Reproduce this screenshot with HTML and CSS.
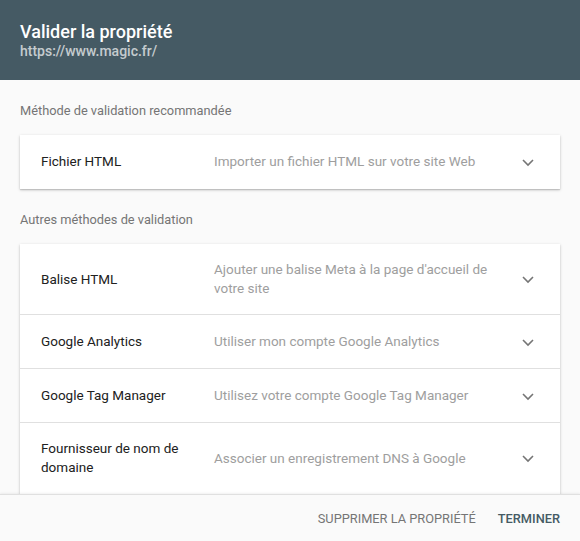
FILE: index.html
```html
<!DOCTYPE html>
<html lang="fr">
<head>
    <meta charset="UTF-8">
    <meta name="viewport" content="width=device-width, initial-scale=1.0">
    <title>Valider la propriété</title>
    <link rel="stylesheet" href="styles.css">
</head>
<body>
    <div class="dialog">
        <div class="header">
            <h1>Valider la propriété</h1>
            <div class="url">https://www.magic.fr/</div>
        </div>

        <div class="content">
            <div class="section-label">Méthode de validation recommandée</div>
            <div class="card">
                <div class="row">
                    <div class="name">Fichier HTML</div>
                    <div class="desc">Importer un fichier HTML sur votre site Web</div>
                    <svg class="chevron" viewBox="0 0 24 24"><path d="M7 10l5 5 5-5"/></svg>
                </div>
            </div>

            <div class="section-label">Autres méthodes de validation</div>
            <div class="card">
                <div class="row">
                    <div class="name">Balise HTML</div>
                    <div class="desc">Ajouter une balise Meta à la page d'accueil de votre site</div>
                    <svg class="chevron" viewBox="0 0 24 24"><path d="M7 10l5 5 5-5"/></svg>
                </div>
                <div class="row">
                    <div class="name">Google Analytics</div>
                    <div class="desc">Utiliser mon compte Google Analytics</div>
                    <svg class="chevron" viewBox="0 0 24 24"><path d="M7 10l5 5 5-5"/></svg>
                </div>
                <div class="row">
                    <div class="name">Google Tag Manager</div>
                    <div class="desc">Utilisez votre compte Google Tag Manager</div>
                    <svg class="chevron" viewBox="0 0 24 24"><path d="M7 10l5 5 5-5"/></svg>
                </div>
                <div class="row">
                    <div class="name">Fournisseur de nom de domaine</div>
                    <div class="desc">Associer un enregistrement DNS à Google</div>
                    <svg class="chevron" viewBox="0 0 24 24"><path d="M7 10l5 5 5-5"/></svg>
                </div>
            </div>
        </div>

        <div class="footer">
            <button class="btn">SUPPRIMER LA PROPRIÉTÉ</button>
            <button class="btn primary">TERMINER</button>
        </div>
    </div>
</body>
</html>
```

FILE: styles.css
```css
html, body {
    margin: 0;
    height: 100%;
}
body {
    font-family: Roboto, "Noto Sans", Arial, sans-serif;
    background-color: #fafafa;
    color: #212121;
}
.dialog {
    display: flex;
    flex-direction: column;
    height: 100%;
}
.header {
    background-color: #455a64;
    padding: 21px 20px 21px;
    flex-shrink: 0;
}
.header h1 {
    margin: 0;
    font-size: 18px;
    font-weight: 500;
    line-height: 22px;
    color: #fff;
}
.url {
    font-size: 14px;
    font-weight: 500;
    line-height: 16px;
    color: rgba(255,255,255,0.7);
}
.content {
    flex: 1;
    overflow: hidden;
    padding: 0 20px;
}
.section-label {
    font-size: 12.8px;
    color: #757575;
    line-height: 18px;
    padding: 22px 0 15px;
}
.card {
    background: #fff;
    box-shadow: 0 1px 3px rgba(0,0,0,0.2), 0 1px 1px rgba(0,0,0,0.12);
}
.row {
    display: flex;
    align-items: center;
    min-height: 21px;
    padding: 16px 20px 16px 21px;
    font-size: 13.5px;
    line-height: 19px;
    border-bottom: 1px solid #e0e0e0;
}
.row:last-child {
    border-bottom-color: transparent;
}
.name {
    width: 173px;
    flex-shrink: 0;
    padding-right: 12px;
    box-sizing: border-box;
}
.desc {
    flex: 1;
    color: #9e9e9e;
    padding-right: 20px;
}
.chevron {
    width: 24px;
    height: 24px;
    margin: -4px 0;
    fill: none;
    stroke: #757575;
    stroke-width: 1.6;
    flex-shrink: 0;
}
.footer {
    flex-shrink: 0;
    height: 46px;
    display: flex;
    justify-content: flex-end;
    align-items: center;
    padding: 0 12px;
    background: #fafafa;
    border-top: 1px solid #e0e0e0;
    box-shadow: 0 -1px 2px rgba(0,0,0,0.06);
}
.btn {
    font-family: inherit;
    font-size: 12.8px;
    font-weight: 400;
    color: #757575;
    background: none;
    border: none;
    padding: 8px;
    margin-left: 6px;
    cursor: pointer;
}
.btn.primary {
    color: #455a64;
    font-weight: 500;
}
```
